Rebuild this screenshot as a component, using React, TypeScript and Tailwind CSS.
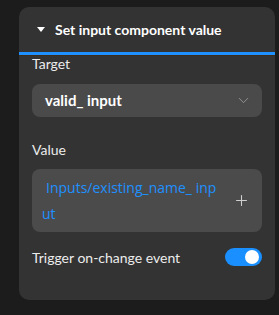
import { ChevronDown, Plus } from 'lucide-react';

export default function App() {
  return (
    <div className="h-[315px] w-[279px] bg-[#1c1c1c] pt-[7px] pl-[19px] font-['Lato','Open_Sans',sans-serif]">
      <div className="w-[256px] overflow-hidden rounded-[10px] bg-[#333333] pb-[33px]">
        <div className="flex h-[45px] items-center pl-[18px]">
          <span className="h-0 w-0 border-x-[4px] border-t-[5px] border-x-transparent border-t-white" />
          <span className="ml-[10px] text-[14px] font-bold text-white">Set input component value</span>
        </div>
        <div className="h-[3px] bg-[#1e90ff]" />
        <div className="h-px bg-[#3a2d1a]" />

        <div className="px-[13px]">
          <div className="text-[14px] leading-4 text-[#ececec]">Target</div>

          <div className="mt-[12px] flex h-[33px] items-center justify-between rounded-[8px] bg-[#4a4a4a] pl-[13px] pr-[10px]">
            <span className="text-[15px] font-bold text-white">valid_ input</span>
            <ChevronDown size={17} strokeWidth={1.25} className="text-[#9a9a9a]" />
          </div>

          <div className="mt-[23px] text-[14px] leading-5 text-[#ececec]">Value</div>

          <div className="mt-[9px] flex h-[63px] items-center justify-between rounded-[8px] bg-[#4b4b4b] pr-[12px]">
            <div className="py-[6px] font-['Open_Sans',sans-serif] text-[14px] font-medium leading-[26px] text-[#1e90ff]">
              <div className="pl-[14px]">Inputs/existing_name_ inp</div>
              <div className="pl-[10px]">ut</div>
            </div>
            <Plus size={17} strokeWidth={1.5} className="text-[#d0d0d0]" />
          </div>

          <div className="mt-[15px] flex h-5 items-center justify-between">
            <span className="text-[14px] text-[#ececec]">Trigger on-change event</span>
            <div className="flex h-[18px] w-[37px] items-center justify-end rounded-full bg-[#1a8fff] pr-[3px]">
              <div className="h-[14px] w-[14px] rounded-full bg-white" />
            </div>
          </div>
        </div>
      </div>
    </div>
  );
}
